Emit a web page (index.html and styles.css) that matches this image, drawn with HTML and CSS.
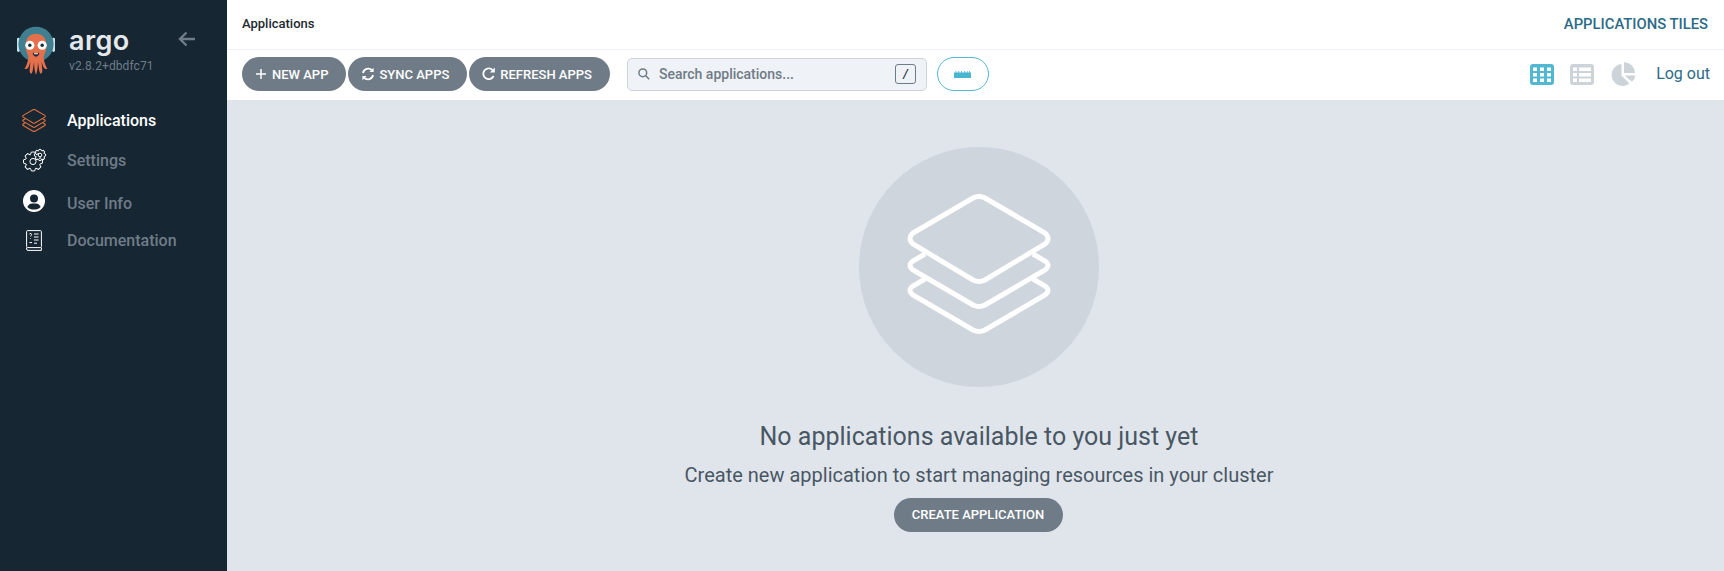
FILE: index.html
```html
<!DOCTYPE html>
<html>
<head>
  <meta charset="UTF-8" />
  <title>Applications - Argo CD</title>
  <link rel="stylesheet" href="styles.css">
</head>
<body>
  <svg class="defs" width="0" height="0">
    <symbol id="layers" viewBox="0 0 144 141" overflow="visible">
      <path d="M66 4 Q72 1 78 4 L138 39 Q144 45 138 50 L78 86 Q72 89 66 86 L6 50 Q0 45 6 39 Z" />
      <path d="M18 60 L6 67 Q0 71 6 76 L66 111 Q72 114 78 111 L138 76 Q144 71 138 67 L126 60" />
      <path d="M18 85 L6 92 Q0 96 6 101 L66 136 Q72 139 78 136 L138 101 Q144 96 138 92 L126 85" />
    </symbol>
    <g id="tooth">
      <path d="M-2.300 -6.300 L-1.500 -8.600 H1.500 L2.300 -6.300 A6.700 6.700 0 0 1 2.830 -6.080" />
    </g>
    <g id="gear">
      <use href="#tooth" />
      <use href="#tooth" transform="rotate(45)" />
      <use href="#tooth" transform="rotate(90)" />
      <use href="#tooth" transform="rotate(135)" />
      <use href="#tooth" transform="rotate(180)" />
      <use href="#tooth" transform="rotate(225)" />
      <use href="#tooth" transform="rotate(270)" />
      <use href="#tooth" transform="rotate(315)" />
      <circle r="2.800" />
    </g>
  </svg>

  <div class="page">
    <!-- Sidebar -->
    <aside class="sidebar">
      <div class="brand">
        <svg class="brand-logo" viewBox="0 0 40 52">
          <rect x="0" y="13" width="3" height="15" rx="1.500" fill="#c9e2ea" />
          <rect x="37" y="13" width="3" height="15" rx="1.500" fill="#c9e2ea" />
          <circle cx="20" cy="20" r="18.500" fill="#3f7f8f" />
          <path d="M9 21 C9 5 31 5 31 21 C31 27 29 31 27 34 L13 34 C11 31 9 27 9 21 Z" fill="#e5704c" />
          <path d="M12 32 C12 40 8 45 8 46 C12 47 13 42 14 38 C14 44 12 50 15 51 C17 50 17 43 18 39 C18 45 19 50 20 52 C21 50 22 45 22 39 C23 43 23 50 25 51 C28 50 26 44 26 38 C27 42 28 47 32 46 C32 45 28 40 28 32 Z" fill="#e5704c" />
          <circle cx="13.500" cy="21" r="4.800" fill="#fff" />
          <circle cx="26.500" cy="21" r="4.800" fill="#fff" />
          <circle cx="13.500" cy="21" r="1.800" fill="#1c2b33" />
          <circle cx="26.500" cy="21" r="1.800" fill="#1c2b33" />
          <path d="M16.500 29 Q20 30 23.500 29 Q23 33 20 33 Q17 33 16.500 29 Z" fill="#1c2b33" />
          <path d="M17.800 29.400 L22.200 29.400 L22 30.600 L18 30.600 Z" fill="#fff" />
        </svg>
        <div class="brand-text">
          <div class="brand-name">argo</div>
          <div class="brand-version">v2.8.2+dbdfc71</div>
        </div>
        <svg class="collapse" viewBox="0 0 18 16">
          <path d="M17 8 H2 M8.500 1.500 L2 8 L8.500 14.500" />
        </svg>
      </div>

      <nav class="nav">
        <a class="nav-item nav-item--active">
          <span class="nav-icon"><svg class="layers-small"><use href="#layers" /></svg></span>
          Applications
        </a>
        <a class="nav-item">
          <span class="nav-icon">
            <svg class="line-icon" width="23" height="22" viewBox="0 0 23 22">
              <use href="#gear" transform="translate(10 12.500) scale(1.100)" stroke-width="0.900" />
              <use class="gear-front" href="#gear" transform="translate(17 6) scale(0.650)" stroke-width="1.500" />
            </svg>
          </span>
          Settings
        </a>
        <a class="nav-item nav-item--user">
          <span class="nav-icon nav-icon--raised">
            <svg width="22" height="22" viewBox="0 0 22 22">
              <circle cx="11" cy="11" r="11" fill="#fff" />
              <circle cx="11" cy="8.600" r="4" fill="#162633" />
              <path d="M4.400 17 C5.500 13.800 8 13.400 11 13.400 C14 13.400 16.500 13.800 17.600 17 C16 18.800 13.600 19.600 11 19.600 C8.400 19.600 6 18.800 4.400 17 Z" fill="#162633" />
            </svg>
          </span>
          User Info
        </a>
        <a class="nav-item">
          <span class="nav-icon">
            <svg class="line-icon" width="16" height="21" viewBox="0 0 16 21">
              <rect x="0.600" y="0.600" width="14.800" height="17" rx="1" />
              <path d="M0.600 17.600 V19 Q0.600 20.400 2 20.400 H15.400 V17.600" />
              <path d="M3.400 4 Q5.600 2.600 5.600 4.600 Q5.600 5.600 4.400 6.400 M4.400 8 V8.600 M8 4 H12.600 M8 7 H12.600 M8 10 H12.600 M3.400 12.600 H6 M8 13.200 H11" />
            </svg>
          </span>
          Documentation
        </a>
      </nav>
    </aside>

    <div class="main">
      <!-- Top bar -->
      <header class="topbar">
        <span class="crumb">Applications</span>
        <span class="page-title">APPLICATIONS TILES</span>
      </header>

      <!-- Toolbar -->
      <div class="toolbar">
        <div class="actions">
          <button class="button">
            <svg class="button-icon button-icon--plus" viewBox="0 0 10 10"><path d="M5 0 V10 M0 5 H10" /></svg>
            NEW APP
          </button>
          <button class="button">
            <svg class="button-icon" viewBox="0 0 14 14">
              <path d="M2 6 A5.200 5.200 0 0 1 11 3.400 M12 8 A5.200 5.200 0 0 1 3 10.600" />
              <path class="solid" d="M12.600 0.800 V5 H8.400 Z M1.400 13.200 V9 H5.600 Z" />
            </svg>
            SYNC APPS
          </button>
          <button class="button">
            <svg class="button-icon" viewBox="0 0 14 14">
              <path d="M11.600 9 A5.400 5.400 0 1 1 10.600 3" />
              <path class="solid" d="M12.800 0.600 V5.600 H7.800 Z" />
            </svg>
            REFRESH APPS
          </button>
        </div>

        <div class="search">
          <svg class="search-icon" viewBox="0 0 12 12">
            <circle cx="4.800" cy="4.800" r="3.900" />
            <path d="M7.700 7.700 L11.200 11.200" />
          </svg>
          <span class="search-text">Search applications...</span>
          <span class="search-key">/</span>
        </div>

        <button class="filter-toggle">
          <svg width="17" height="7" viewBox="0 0 17 7">
            <path d="M0 1.500 H1.600 V0 H2.400 V1.500 H4.400 V0 H5.200 V1.500 H7.200 V0 H8 V1.500 H10 V0 H10.800 V1.500 H12.800 V0 H13.600 V1.500 H15.200 V0 H16 V1.500 H17 V7 H0 Z" fill="#4ab5ce" />
          </svg>
        </button>

        <div class="views">
          <svg class="view-icon" width="24" height="21" viewBox="0 0 24 21">
            <rect width="24" height="21" rx="3" fill="#52b8d1" />
            <path d="M3 3.500 H7 V7 H3 Z M10 3.500 H14 V7 H10 Z M17 3.500 H21 V7 H17 Z M3 9 H7 V12.500 H3 Z M10 9 H14 V12.500 H10 Z M17 9 H21 V12.500 H17 Z M3 14.500 H7 V18 H3 Z M10 14.500 H14 V18 H10 Z M17 14.500 H21 V18 H17 Z" fill="#fff" />
          </svg>
          <svg class="view-icon" width="24" height="21" viewBox="0 0 24 21">
            <rect width="24" height="21" rx="3" fill="#ccd4da" />
            <path d="M3 3.500 H7 V7 H3 Z M9 3.500 H21 V7 H9 Z M3 9 H7 V12.500 H3 Z M9 9 H21 V12.500 H9 Z M3 14.500 H7 V18 H3 Z M9 14.500 H21 V18 H9 Z" fill="#fff" />
          </svg>
          <svg class="view-icon" width="26" height="24" viewBox="0 0 26 24">
            <path d="M11.500 2 A11 11 0 1 0 19.500 21.500 L11.500 13.500 Z" fill="#ccd4da" />
            <path d="M14 0 A11.500 11.500 0 0 1 25 11 H14 Z" fill="#ccd4da" />
            <path d="M14.500 13.500 H25.500 A11 11 0 0 1 22 19.800 Z" fill="#ccd4da" />
          </svg>
          <a class="logout">Log out</a>
        </div>
      </div>

      <!-- Empty state -->
      <main class="empty">
        <div class="empty-circle">
          <svg class="layers-big"><use href="#layers" /></svg>
        </div>
        <h4 class="empty-title">No applications available to you just yet</h4>
        <h5 class="empty-sub">Create new application to start managing resources in your cluster</h5>
        <button class="button button--create">CREATE APPLICATION</button>
      </main>
    </div>
  </div>
</body>
</html>
```

FILE: styles.css
```css
* {
  box-sizing: border-box;
}
html, body {
  height: 100%;
}
body {
  margin: 0;
  font-family: 'Roboto', sans-serif;
  overflow: hidden;
}
.defs {
  display: block;
  height: 0;
}
.page {
  display: flex;
  height: 571px;
}

/* Sidebar */
.sidebar {
  width: 227px;
  flex-shrink: 0;
  background-color: #162633;
  color: #fff;
}
.brand {
  display: flex;
  align-items: flex-start;
  height: 102px;
  padding: 25px 0 0 17px;
}
.brand-logo {
  width: 38px;
  height: 50px;
  flex-shrink: 0;
}
.brand-text {
  margin-left: 14px;
  width: 108px;
}
.brand-name {
  font-family: 'Inter', sans-serif;
  font-size: 27px;
  font-weight: 600;
  line-height: 31px;
  letter-spacing: 0.4px;
  color: #e6e9eb;
}
.brand-version {
  font-size: 12px;
  line-height: 16px;
  margin-top: 2px;
  color: #6f7c87;
  letter-spacing: 0.1px;
}
.collapse {
  width: 18px;
  height: 16px;
  margin: 6px 0 0 1px;
  fill: none;
  stroke: #6f7c87;
  stroke-width: 2.400;
}
.nav {
  display: flex;
  flex-direction: column;
  gap: 4px;
}
.nav-item {
  display: flex;
  align-items: center;
  height: 36px;
  font-size: 16px;
  font-weight: 500;
  color: #6f7c87;
}
.nav-item--active {
  color: #fff;
}
.nav-item--user {
  margin: 3px 0 -3px;
}
.nav-icon {
  display: flex;
  justify-content: center;
  width: 67px;
  padding-left: 1px;
  flex-shrink: 0;
}
.nav-icon--raised {
  margin-bottom: 4px;
}
.line-icon {
  fill: none;
  stroke: #fff;
  stroke-width: 1;
  overflow: visible;
}
.gear-front {
  fill: #162633;
}
.layers-small {
  width: 24px;
  height: 23px;
  fill: none;
  stroke: #e0703c;
  stroke-width: 7;
}

/* Main */
.main {
  flex: 1;
  display: flex;
  flex-direction: column;
  min-width: 0;
  background-color: #e0e5ec;
}
.topbar {
  display: flex;
  align-items: center;
  justify-content: space-between;
  height: 50px;
  padding: 0 16px 2px 15px;
  background-color: #fff;
  border-bottom: 1px solid #eceff3;
}
.crumb {
  font-size: 13px;
  font-weight: 500;
  color: #22292f;
}
.page-title {
  font-size: 14.800px;
  font-weight: 500;
  color: #2c6a87;
}
.toolbar {
  display: flex;
  align-items: center;
  height: 50px;
  padding: 0 14px 2px 15px;
  background-color: #fff;
}
.actions {
  display: flex;
  gap: 2px;
}
.button {
  display: inline-flex;
  align-items: center;
  height: 34px;
  padding: 0 18px 0 13px;
  background-color: #6f7c87;
  color: #fff;
  font-family: 'Roboto', sans-serif;
  font-size: 13px;
  font-weight: 500;
  border: none;
  border-radius: 17px;
  cursor: pointer;
}
.button-icon {
  width: 14px;
  height: 14px;
  margin-right: 4px;
  fill: none;
  stroke: #fff;
  stroke-width: 1.800;
}
.button-icon .solid {
  fill: #fff;
  stroke: none;
}
.button-icon--plus {
  width: 10px;
  height: 10px;
  margin: 0 6px 0 1px;
  stroke-width: 1.500;
}
.search {
  display: flex;
  align-items: center;
  width: 300px;
  height: 33px;
  margin-left: 17px;
  padding: 0 10px;
  background-color: #eff2f6;
  border: 1px solid #cdd4da;
  border-radius: 5px;
}
.search-icon {
  width: 12px;
  height: 12px;
  fill: none;
  stroke: #6f7c87;
  stroke-width: 1.500;
}
.search-text {
  margin: 0 0 1px 9px;
  font-size: 14px;
  font-weight: 500;
  color: #6f7c87;
}
.search-key {
  display: flex;
  align-items: center;
  justify-content: center;
  width: 21px;
  height: 20px;
  margin-left: auto;
  border: 1px solid #6f7c87;
  border-radius: 3px;
  font-size: 12px;
  font-weight: 500;
  font-style: italic;
  color: #22292f;
}
.filter-toggle {
  display: flex;
  align-items: center;
  justify-content: center;
  width: 52px;
  height: 34px;
  margin-left: 10px;
  background-color: #fff;
  border: 1px solid #52b8d1;
  border-radius: 17px;
}
.views {
  display: flex;
  align-items: center;
  margin-left: auto;
}
.view-icon {
  margin-right: 16px;
}
.logout {
  margin: 0 0 2px 4px;
  font-size: 16px;
  color: #2c6a87;
}

/* Empty state */
.empty {
  flex: 1;
  display: flex;
  flex-direction: column;
  align-items: center;
  padding: 47px 0 0 7px;
}
.empty-circle {
  display: flex;
  align-items: center;
  justify-content: center;
  width: 240px;
  height: 240px;
  border-radius: 50%;
  background-color: #ced5dc;
}
.layers-big {
  width: 144px;
  height: 141px;
  margin-bottom: 5px;
  fill: none;
  stroke: #fff;
  stroke-width: 5;
}
.empty-title {
  margin: 35px 0 0;
  font-size: 25px;
  font-weight: 400;
  line-height: 30px;
  color: #495763;
}
.empty-sub {
  margin: 10px 0 0;
  font-size: 20px;
  font-weight: 400;
  line-height: 26px;
  color: #495763;
}
.button--create {
  justify-content: center;
  width: 169px;
  margin: 10px 2px 0 0;
  padding: 0 0 2px;
}
```
